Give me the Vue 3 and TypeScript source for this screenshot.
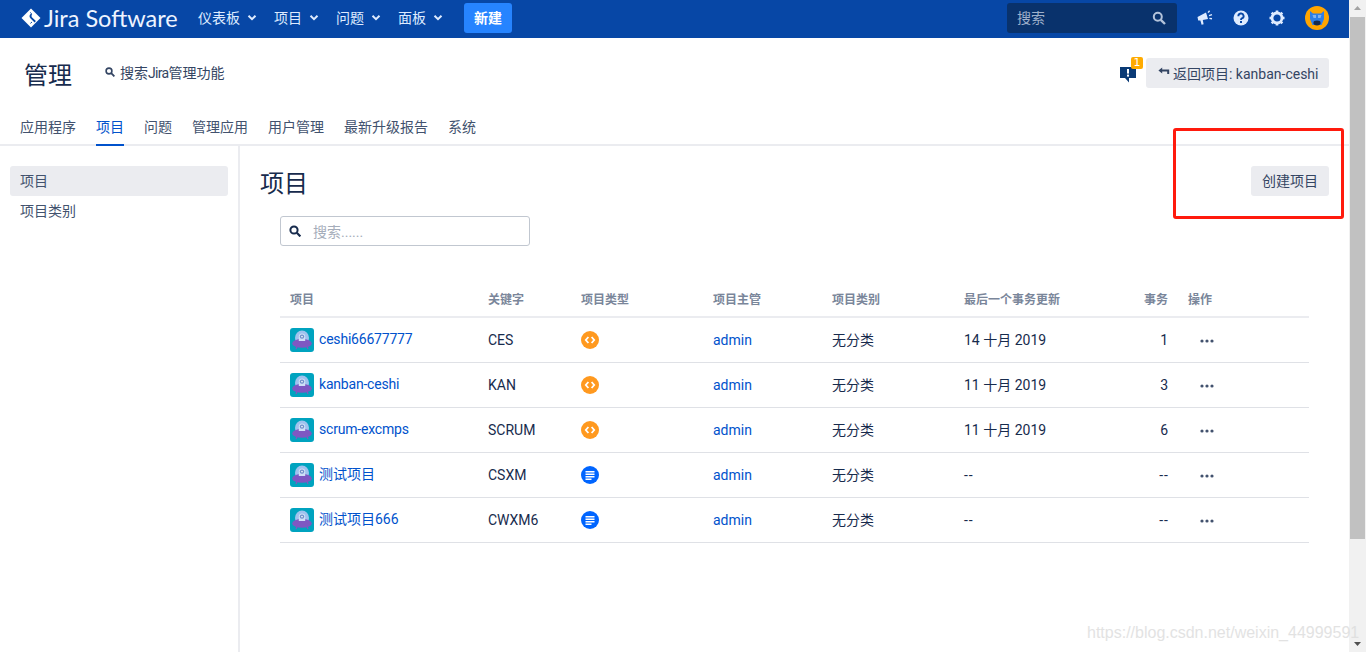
<script setup lang="ts">
interface Project {
  name: string
  key: string
  type: 'code' | 'doc'
  updated: string
  issues: string
  latin: boolean
}

const mainNav: string[] = ['仪表板', '项目', '问题', '面板']
const tabs: string[] = ['应用程序', '项目', '问题', '管理应用', '用户管理', '最新升级报告', '系统']
const columns: string[] = ['项目', '关键字', '项目类型', '项目主管', '项目类别', '最后一个事务更新', '事务', '操作']
const projects: Project[] = [
  { name: 'ceshi66677777', key: 'CES', type: 'code', updated: '14 十月 2019', issues: '1', latin: true },
  { name: 'kanban-ceshi', key: 'KAN', type: 'code', updated: '11 十月 2019', issues: '3', latin: true },
  { name: 'scrum-excmps', key: 'SCRUM', type: 'code', updated: '11 十月 2019', issues: '6', latin: true },
  { name: '测试项目', key: 'CSXM', type: 'doc', updated: '--', issues: '--', latin: false },
  { name: '测试项目666', key: 'CWXM6', type: 'doc', updated: '--', issues: '--', latin: false }
]
</script>

<template>
  <div class="window">
    <div class="page">
      <header class="topbar">
        <div class="logo">
          <svg class="logo-mark" width="20" height="20" viewBox="0 0 20 20">
            <path d="M10 0.5 L19.5 10 L10 19.5 L0.5 10 Z" fill="#fff" />
            <path d="M10 5.6 Q7.2 8 9.6 10.6 L13.6 14.4 L14.9 13.1 L10.9 9.2 Q9.7 7.6 11.2 6.8 Z" fill="#0747a6" />
            <path d="M9.4 4.4 L10.6 5.8 M9.4 15.4 L11 14" stroke="#0747a6" stroke-width="1" />
          </svg>
          <span class="logo-text">Jira Software</span>
        </div>
        <nav class="main-nav">
          <a v-for="item in mainNav" :key="item" class="main-link">
            <span class="lift">{{ item }}</span>
            <svg width="10" height="8" viewBox="0 0 10 8"><path d="M1.5 1.8 L5 5.2 L8.5 1.8" fill="none" stroke="#deebff" stroke-width="2" /></svg>
          </a>
        </nav>
        <button class="create"><span class="lift">新建</span></button>
        <div class="grow"></div>
        <div class="quick-search">
          <span class="lift">搜索</span>
          <svg width="14" height="14" viewBox="0 0 14 14"><circle cx="5.8" cy="5.8" r="4" fill="none" stroke="#b3c3da" stroke-width="2" /><path d="M8.8 8.8 L13 13" stroke="#b3c3da" stroke-width="2.4" /></svg>
        </div>
        <svg class="tool megaphone" width="16" height="16" viewBox="0 0 16 16">
          <path d="M0.5 7 L9 2.5 L11 9 L5.8 10 L6.6 14.2 L4.6 14.8 L3.4 10.4 L1.2 10.6 Z" fill="#deebff" />
          <path d="M11 2.6 L12.6 0.8 M12 5.6 L15 4.6 M12.4 8.4 L15 8.8" stroke="#deebff" stroke-width="1.4" />
        </svg>
        <svg class="tool help" width="16" height="16" viewBox="0 0 16 16">
          <circle cx="8" cy="8" r="7.5" fill="#deebff" />
          <path d="M5.4 6.2 A2.6 2.5 0 1 1 8.8 8.4 Q8 8.8 8 10" fill="none" stroke="#0747a6" stroke-width="1.9" />
          <rect x="7" y="11" width="2" height="2" fill="#0747a6" />
        </svg>
        <svg class="tool cog" width="16" height="16" viewBox="0 0 16 16">
          <circle cx="8" cy="8" r="5" fill="none" stroke="#deebff" stroke-width="2.8" />
          <g stroke="#deebff" stroke-width="2.6">
            <path d="M8 0.5 V3 M8 13 V15.5 M0.5 8 H3 M13 8 H15.5 M2.7 2.7 L4.4 4.4 M11.6 11.6 L13.3 13.3 M13.3 2.7 L11.6 4.4 M4.4 11.6 L2.7 13.3" />
          </g>
        </svg>
        <svg class="avatar" width="24" height="24" viewBox="0 0 24 24">
          <circle cx="12" cy="12" r="12" fill="#ffa500" />
          <path d="M5 5 L8 7.5 H16 L19 5 V13 L16.5 19 H7.5 L5 13 Z" fill="#2f7fe8" />
          <path d="M7.5 9 H11 V12 L8.5 12 Z M13 9 H16.5 L15.5 12 H13 Z" fill="#7fb2f2" />
          <ellipse cx="12" cy="17" rx="3.6" ry="2.4" fill="#172b4d" />
        </svg>
      </header>

      <section class="admin-head">
        <div class="admin-row">
          <h1 class="admin-title">管理</h1>
          <div class="admin-search">
            <svg width="10" height="10" viewBox="0 0 10 10"><circle cx="4" cy="4" r="2.9" fill="none" stroke="#344563" stroke-width="1.6" /><path d="M6.2 6.2 L9.4 9.4" stroke="#344563" stroke-width="1.8" /></svg>
            <span>搜索<span class="tight">Jira</span>管理功能</span>
          </div>
          <div class="grow"></div>
          <div class="feedback">
            <svg width="16" height="19" viewBox="0 0 16 19">
              <path d="M0 3 H16 V14 H9 V18.5 L5 14 H0 Z" fill="#0a3a75" />
              <rect x="7" y="5" width="2" height="4.6" fill="#fff" />
              <rect x="7" y="10.6" width="2" height="2" fill="#fff" />
            </svg>
            <span class="badge">1</span>
          </div>
          <button class="btn back">
            <svg class="back-arrow" width="12" height="8" viewBox="0 0 12 8"><path d="M4.2 0.4 L0.4 3.4 L4.2 6.4 V4.4 H9.2 V7 H11.2 V2.6 H4.2 Z" fill="#344563" /></svg>
            <span>返回项目: kanban-ceshi</span>
          </button>
        </div>
        <nav class="tabs">
          <a v-for="(tab, i) in tabs" :key="tab" class="tab" :class="{ active: i === 1 }">{{ tab }}</a>
        </nav>
      </section>

      <div class="body">
        <aside class="side">
          <a class="side-item selected">项目</a>
          <a class="side-item">项目类别</a>
        </aside>
        <main class="content">
          <div class="content-head">
            <h2 class="content-title">项目</h2>
            <button class="btn create-project"><span class="lift">创建项目</span></button>
          </div>
          <div class="content-inner">
            <div class="filter">
              <svg width="12" height="12" viewBox="0 0 12 12"><circle cx="5" cy="5" r="3.6" fill="none" stroke="#172b4d" stroke-width="2" /><path d="M7.8 7.8 L11.4 11.4" stroke="#172b4d" stroke-width="2.2" /></svg>
              <span>搜索......</span>
            </div>
            <div class="table">
              <div class="row head">
                <span v-for="(col, i) in columns" :key="col" :class="{ num: i === 6 }">{{ col }}</span>
              </div>
              <div v-for="p in projects" :key="p.key" class="row">
                <span class="name">
                  <svg class="proj-icon" width="24" height="24" viewBox="0 0 24 24">
                    <rect width="24" height="24" rx="3" fill="#00a3bf" />
                    <ellipse cx="12" cy="10" rx="7" ry="7.4" fill="#9fc2ee" />
                    <ellipse cx="12" cy="15.4" rx="9.8" ry="4.4" fill="#7e57c2" />
                    <path d="M7 18.5 L6 21 M17 18.5 L18 21" stroke="#7e57c2" stroke-width="1.4" />
                    <path d="M8.8 13 V8.6 A3.2 3.2 0 0 1 15.2 8.6 V13 Z" fill="#cfe0f7" />
                    <circle cx="12" cy="8.6" r="2.2" fill="#6f8fc9" />
                    <circle cx="12" cy="8.6" r="0.9" fill="#eef4fc" />
                  </svg>
                  <a class="link project-link" :class="p.latin ? 'latin' : 'cjk'">{{ p.name }}</a>
                </span>
                <span>{{ p.key }}</span>
                <span class="type">
                  <svg v-if="p.type === 'code'" width="18" height="18" viewBox="0 0 18 18">
                    <circle cx="9" cy="9" r="9" fill="#ff991f" />
                    <path d="M7.4 6 L4.8 9 L7.4 12 M10.6 6 L13.2 9 L10.6 12" fill="none" stroke="#fff" stroke-width="1.8" />
                  </svg>
                  <svg v-else width="18" height="18" viewBox="0 0 18 18">
                    <circle cx="9" cy="9" r="9" fill="#0065ff" />
                    <path d="M4.5 5.8 H13.5 M4.5 8.3 H13.5 M4.5 10.8 H13.5 M4.5 13.2 H10.5" stroke="#fff" stroke-width="1.4" />
                  </svg>
                </span>
                <a class="link">admin</a>
                <span class="lift">无分类</span>
                <span :class="p.updated === '--' ? 'dash' : 'lift'">{{ p.updated }}</span>
                <span class="num" :class="{ dash: p.issues === '--' }">{{ p.issues }}</span>
                <svg class="more" width="16" height="4" viewBox="0 0 16 4">
                  <circle cx="3" cy="2" r="1.6" fill="#42526e" />
                  <circle cx="8" cy="2" r="1.6" fill="#42526e" />
                  <circle cx="13" cy="2" r="1.6" fill="#42526e" />
                </svg>
              </div>
            </div>
          </div>
        </main>
      </div>
    </div>

    <div class="scrollbar">
      <svg width="17" height="17" viewBox="0 0 17 17"><path d="M5 10 L8.5 6 L12 10 Z" fill="#a3a3a3" /></svg>
      <div class="thumb"></div>
      <div class="grow"></div>
      <svg width="17" height="17" viewBox="0 0 17 17"><path d="M5 7 L8.5 11 L12 7 Z" fill="#505050" /></svg>
    </div>

    <div class="annotation"></div>
    <div class="watermark">https://blog.csdn.net/weixin_44999591</div>
  </div>
</template>

<style>
html, body { margin: 0; overflow: hidden; }
</style>

<style scoped>
.window {
  position: relative;
  display: flex;
  width: 1366px;
  height: 652px;
  overflow: hidden;
  background: #fff;
  color: #172b4d;
  font-family: Roboto, "Noto Sans CJK SC", sans-serif;
  font-size: 14px;
}
.page { flex: 1; min-width: 0; display: flex; flex-direction: column; }
.grow { flex: 1; }
.lift { display: block; padding-bottom: 2px; }
.topbar {
  height: 38px;
  flex: none;
  box-sizing: border-box;
  display: flex;
  align-items: center;
  background: #0747a6;
  color: #deebff;
  padding: 0 20px 2px 0;
}
.logo { display: flex; align-items: center; margin-left: 21px; }
.logo-text { margin-left: 3px; font-family: Lato, sans-serif; font-size: 23.5px; line-height: 24px; color: #eef4ff; width: 134px; white-space: nowrap; }
.main-nav { display: flex; margin-left: 20px; gap: 17px; }
.main-link { display: flex; align-items: center; gap: 7px; }
.create {
  width: 48px; height: 30px; margin-left: 21px;
  border: 0; border-radius: 3px;
  background: #2684ff; color: #fff;
  font: 700 14px "Noto Sans CJK SC", sans-serif;
  padding: 0;
}
.quick-search {
  width: 170px; height: 30px; box-sizing: border-box;
  display: flex; align-items: center; justify-content: space-between;
  padding: 0 11px 0 10px;
  background: #09326c; border-radius: 3px; color: #9fb0cb;
  margin-right: 12px;
}
.megaphone { margin-left: 8px; }
.help { margin-left: 20px; }
.cog { margin-left: 20px; }
.avatar { margin-left: 20px; }

.admin-head { flex: none; height: 108px; display: flex; flex-direction: column; box-sizing: border-box; border-bottom: 2px solid #ebecf0; }
.admin-row { display: flex; align-items: center; height: 70px; padding: 0 20px 0 24px; }
.admin-title { margin: 0; font-size: 24px; font-weight: 400; width: 81px; }
.admin-search { display: flex; align-items: center; gap: 5px; color: #344563; padding-bottom: 2px; }
.tight { letter-spacing: -0.7px; }
.feedback { position: relative; width: 26px; height: 30px; display: flex; align-items: center; }
.badge {
  position: absolute; left: 11px; top: -1px;
  width: 12px; height: 12px; border-radius: 2px;
  background: #ffab00; color: #fff;
  font: 11px/12px "DejaVu Sans", sans-serif; text-align: center;
}
.btn {
  border: 0; border-radius: 3px; background: #ebecf0; color: #344563;
  font: inherit; height: 30px; padding: 0 11px;
  display: inline-flex; align-items: center;
}
.back { width: 183px; gap: 3px; white-space: nowrap; padding-left: 12px; }
.back-arrow { flex: none; margin-bottom: 4px; }
.tabs { display: flex; gap: 20px; padding-left: 20px; height: 36px; }
.tab { color: #42526e; height: 36px; line-height: 38px; box-sizing: border-box; position: relative; }
.tab.active { color: #0052cc; }
.tab.active::after {
  content: ""; position: absolute; left: 0; right: 0; bottom: -2px; height: 2px; background: #0052cc;
}

.body { flex: 1; display: flex; min-height: 0; }
.side { width: 240px; box-sizing: border-box; flex: none; border-right: 2px solid #ebecf0; padding: 20px 10px; display: flex; flex-direction: column; }
.side-item { height: 30px; line-height: 30px; padding: 0 10px; border-radius: 3px; color: #42526e; }
.side-item.selected { background: #ebecf0; }
.content { flex: 1; min-width: 0; padding: 20px 20px 0; }
.content-head { display: flex; justify-content: space-between; align-items: flex-start; height: 50px; }
.content-title { margin: 0; padding-top: 1px; font-size: 24px; font-weight: 400; line-height: 34px; }
.create-project { width: 78px; justify-content: center; padding: 0; }
.content-inner { padding: 0 20px; }
.filter {
  width: 250px; height: 30px; box-sizing: border-box;
  border: 1px solid #c1c7d0; border-radius: 3px;
  display: flex; align-items: center; padding-left: 8px; gap: 12px;
  color: #a5adba;
}
.table { margin-top: 38px; }
.row {
  display: grid;
  grid-template-columns: 198px 93px 132px 119px 132px 140px 64px 1fr;
  align-items: center;
  height: 45px;
  box-sizing: border-box;
  padding-left: 10px;
  border-bottom: 1px solid #dfe1e6;
  white-space: nowrap;
}
.row > :last-child { margin-left: 20px; }
.row.head { height: 34px; border-bottom: 2px solid #ebecf0; color: #7a869a; font-size: 12px; font-weight: 600; align-items: start; padding-top: 6px; }
.name { display: flex; align-items: center; gap: 5px; }
.link { color: #0052cc; }
.project-link.latin { padding-bottom: 2px; letter-spacing: -0.2px; }
.project-link.cjk { padding-bottom: 4px; }
.type { display: flex; }
.num { text-align: right; }
.dash { letter-spacing: 1px; }
.num.dash { margin-right: -1px; }
.row > .more { margin: 2px 0 0 31px; }

.scrollbar { width: 17px; flex: none; background: #f1f1f1; display: flex; flex-direction: column; }
.thumb { height: 522px; background: #c1c1c1; margin: 0 1px; }

.annotation {
  position: absolute; left: 1173px; top: 128px;
  width: 171px; height: 91px; box-sizing: border-box;
  border: 3px solid #ff1a0d; border-radius: 3px;
}
.watermark {
  position: absolute; left: 1087px; top: 624px;
  font: 16px "Liberation Sans", sans-serif;
  color: #dcdcdc; opacity: .8; white-space: nowrap;
}
</style>
